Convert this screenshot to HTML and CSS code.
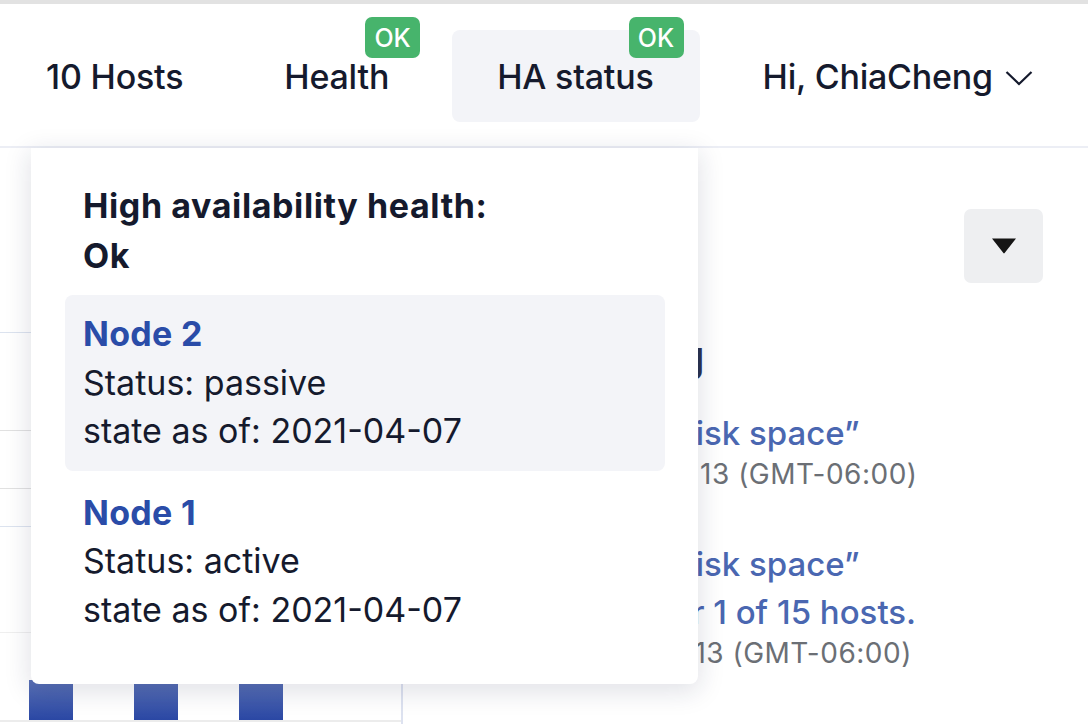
FILE: index.html
```html
<!DOCTYPE html>
<html lang="en">
<head>
<meta charset="utf-8">
<title>HA status</title>
<link rel="stylesheet" href="styles.css">
</head>
<body>
<div class="topband"></div>
<header class="masthead">
  <nav class="nav">
    <div class="nav-item">10 Hosts</div>
    <div class="nav-item health">Health<span class="badge">OK</span></div>
    <div class="nav-item active">HA status<span class="badge">OK</span></div>
    <div class="nav-item user">Hi, ChiaCheng
      <svg class="chevron" width="28" height="16" viewBox="0 0 28 16"><polyline points="1.5,2 14,14 26.5,2" fill="none" stroke="#151a2d" stroke-width="2.2"/></svg>
    </div>
  </nav>
</header>
<main class="main">
  <section class="left">
    <div class="row r1"></div>
    <div class="row r2"></div>
    <div class="row r3"></div>
    <div class="row r4"></div>
    <div class="row r5"></div>
    <div class="chart">
      <div class="bar"></div>
      <div class="bar"></div>
      <div class="bar"></div>
    </div>
  </section>
  <section class="right">
    <div class="toolbar">
      <button class="toggle" type="button" aria-label="Options">
        <svg width="28" height="18" viewBox="0 0 28 18"><path d="M2 1.5 H26 L14.6 16 Q14 16.8 13.4 16 Z" fill="#151515"/></svg>
      </button>
    </div>
    <h2 class="heading">Monitoring</h2>
    <ul class="events">
      <li class="event">
        <a class="event-title">Alert: “Low disk space”</a>
        <div class="event-meta">2021-04-07 12:13 (GMT-06:00)</div>
      </li>
      <li class="event">
        <a class="event-title">Alert: “Low disk space”<br>registered for 1 of 15 hosts.</a>
        <div class="event-meta">2021-04-07 11:13 (GMT-06:00)</div>
      </li>
    </ul>
  </section>
  <div class="ha-menu">
    <div class="ha-title">High availability health:<br>Ok</div>
    <div class="node selected">
      <div class="node-name">Node 2</div>
      <div>Status: passive</div>
      <div>state as of: 2021-04-07</div>
    </div>
    <div class="node">
      <div class="node-name">Node 1</div>
      <div>Status: active</div>
      <div>state as of: 2021-04-07</div>
    </div>
  </div>
</main>
</body>
</html>
```
FILE: styles.css
```css
* { box-sizing: border-box; }
html, body { margin: 0; padding: 0; }
body {
  width: 1088px;
  height: 724px;
  overflow: hidden;
  background: #ffffff;
  font-family: "Inter", "Open Sans", sans-serif;
  color: #151a2d;
}
.topband { height: 4px; background: #e2e2e2; }
.masthead {
  height: 144px;
  border-bottom: 2px solid #eceef5;
  display: flex;
  align-items: center;
}
.nav {
  display: flex;
  align-items: center;
  gap: 16px;
  padding-left: 1px;
  margin-top: 2px;
}
.nav-item {
  position: relative;
  height: 92px;
  padding: 0 45px;
  display: flex;
  align-items: center;
  gap: 12px;
  border-radius: 8px;
  font-size: 34px;
  font-weight: 500;
  letter-spacing: -0.2px;
  white-space: nowrap;
}
.nav-item.health { padding: 0 47px 0 40px; }
.nav-item.active { background: #f3f4f8; padding: 0 46px 0 45px; }
.nav-item.user { padding-left: 47px; }
.chevron { margin-top: 4px; }
.badge {
  position: absolute;
  top: -13px;
  right: 16px;
  width: 55px;
  height: 41px;
  border-radius: 7px;
  background: #47b46c;
  color: #ffffff;
  font-size: 25px;
  font-weight: 500;
  letter-spacing: 0;
  display: flex;
  align-items: center;
  justify-content: center;
}
.main {
  position: relative;
  display: flex;
  height: 576px;
}
.left {
  width: 403px;
  border-right: 2px solid #dde2f0;
  display: flex;
  flex-direction: column;
}
.row { flex: none; }
.r1 { height: 185px; border-bottom: 1px solid #dce3ef; }
.r2 { height: 98px; border-bottom: 1px solid #e1e1e1; }
.r3 { height: 58px; border-bottom: 1px solid #e1e1e1; }
.r4 { height: 38px; border-bottom: 1px solid #dce3ef; }
.r5 { height: 106px; border-bottom: 1px solid #efefef; }
.chart {
  height: 89px;
  display: flex;
  align-items: flex-end;
  gap: 61px;
  padding-left: 29px;
  border-bottom: 2px solid #ececec;
}
.bar {
  width: 44px;
  height: 40px;
  background: linear-gradient(#5b72b6, #2a47a4);
}
.right {
  flex: 1;
  padding: 61px 45px 0 88px;
  min-width: 0;
  overflow: hidden;
}
.toolbar { display: flex; justify-content: flex-end; }
.toggle {
  width: 79px;
  height: 74px;
  border: 0;
  border-radius: 7px;
  background: #eeeff1;
  display: flex;
  align-items: center;
  justify-content: center;
  padding: 0;
}
.heading {
  margin: 48px 0 0;
  font-size: 42px;
  line-height: 50px;
  font-weight: 500;
  letter-spacing: -0.4px;
  color: #2b3250;
  white-space: nowrap;
}
.events { list-style: none; margin: 28px 0 0; padding: 0; }
.event { margin-bottom: 49px; white-space: nowrap; }
.event-title {
  display: block;
  font-size: 33px;
  line-height: 48px;
  font-weight: 500;
  color: #4a67b1;
}
.event-meta {
  font-size: 28px;
  line-height: 34px;
  letter-spacing: 0.5px;
  color: #6b6f75;
}
.ha-menu {
  position: absolute;
  top: 0;
  left: 31px;
  width: 667px;
  padding: 33px 33px 35px 34px;
  background: #ffffff;
  border-radius: 0 0 8px 8px;
  box-shadow: 0 6px 26px 2px rgba(20, 30, 70, 0.13);
  font-size: 34px;
  line-height: 48.5px;
  z-index: 2;
}
.ha-title {
  padding-left: 18px;
  font-weight: 700;
  letter-spacing: 0.6px;
  line-height: 50px;
  margin-bottom: 14px;
}
.node {
  padding: 15px 18px;
  border-radius: 8px;
}
.node + .node { margin-top: 3px; }
.node.selected { background: #f3f4f8; }
.node-name { font-weight: 700; color: #2a4ca8; letter-spacing: 0.3px; }
```
